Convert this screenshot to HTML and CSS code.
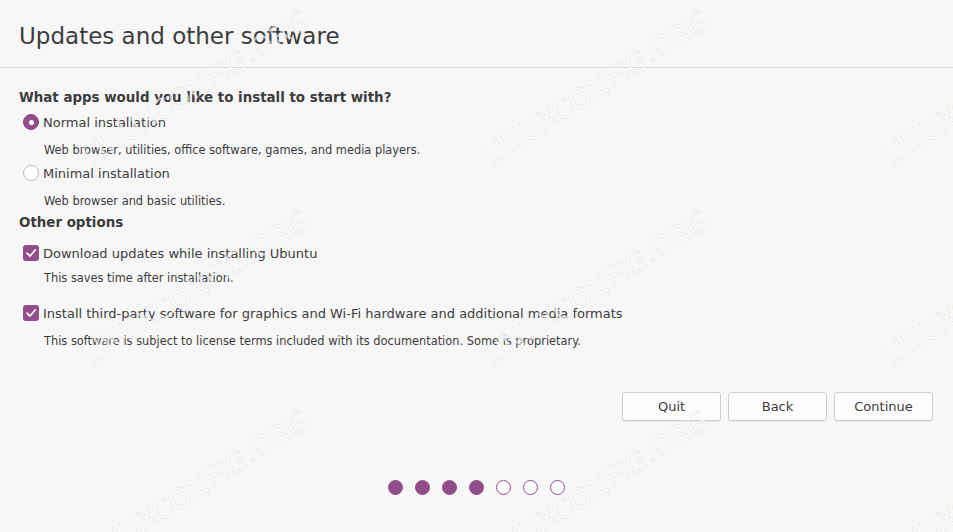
FILE: index.html
```html
<!DOCTYPE html>
<html>
<head>
	<title>Updates and other software</title>
	<meta charset="UTF-8">
	<link rel="stylesheet" href="styles.css">
</head>
<body>

<div class="window">
	<header class="top">
		<h1>Updates and other software</h1>
	</header>

	<main class="content">
		<h2 class="first">What apps would you like to install to start with?</h2>

		<div class="option">
			<span class="radio checked"></span>
			<span class="label">Normal installation</span>
		</div>
		<p class="desc">Web browser, utilities, office software, games, and media players.</p>

		<div class="option minimal">
			<span class="radio"></span>
			<span class="label">Minimal installation</span>
		</div>
		<p class="desc">Web browser and basic utilities.</p>

		<h2 class="other">Other options</h2>

		<div class="option updates">
			<span class="check"><svg viewBox="0 0 16 16" width="16" height="16"><path d="M4 8.2 L7 11 L12.2 5" fill="none" stroke="#fff" stroke-width="1.8" stroke-linecap="round" stroke-linejoin="round"/></svg></span>
			<span class="label">Download updates while installing Ubuntu</span>
		</div>
		<p class="desc short">This saves time after installation.</p>

		<div class="option thirdparty">
			<span class="check"><svg viewBox="0 0 16 16" width="16" height="16"><path d="M4 8.2 L7 11 L12.2 5" fill="none" stroke="#fff" stroke-width="1.8" stroke-linecap="round" stroke-linejoin="round"/></svg></span>
			<span class="label">Install third-party software for graphics and Wi-Fi hardware and additional media formats</span>
		</div>
		<p class="desc">This software is subject to license terms included with its documentation. Some is proprietary.</p>

		<div class="buttons">
			<button>Quit</button>
			<button>Back</button>
			<button>Continue</button>
		</div>

		<ul class="steps">
			<li class="done"></li>
			<li class="done"></li>
			<li class="done"></li>
			<li class="done"></li>
			<li></li>
			<li></li>
			<li></li>
		</ul>
	</main>

	<div class="marks">
		<span class="mark" style="left:90px;top:144px">LINUXCONFIG.ORG</span>
		<span class="mark" style="left:490px;top:144px">LINUXCONFIG.ORG</span>
		<span class="mark" style="left:890px;top:144px">LINUXCONFIG.ORG</span>
		<span class="mark" style="left:90px;top:344px">LINUXCONFIG.ORG</span>
		<span class="mark" style="left:490px;top:344px">LINUXCONFIG.ORG</span>
		<span class="mark" style="left:890px;top:344px">LINUXCONFIG.ORG</span>
		<span class="mark" style="left:90px;top:544px">LINUXCONFIG.ORG</span>
		<span class="mark" style="left:490px;top:544px">LINUXCONFIG.ORG</span>
		<span class="mark" style="left:890px;top:544px">LINUXCONFIG.ORG</span>
	</div>
</div>

</body>
</html>
```

FILE: styles.css
```css
html, body
{
	margin:0;
	padding:0;
	background:#f7f7f7;
}
body
{
	font-family:"DejaVu Sans", sans-serif;
	color:#3c3c3c;
	width:953px;
	height:532px;
	overflow:hidden;
}
.window
{
	position:relative;
	height:532px;
	overflow:hidden;
}
.top
{
	height:68px;
	box-sizing:border-box;
	border-bottom:1px solid #dcdcdc;
	display:flex;
	align-items:center;
	padding:5px 19px 0 19px;
}
h1
{
	font-size:23px;
	font-weight:normal;
	margin:0;
}
.content
{
	padding:0 20px 0 19px;
}
h2
{
	font-size:13.4px;
	font-weight:bold;
	line-height:18px;
	margin:0;
}
h2.first { margin-top:21px; }
h2.other { margin-top:6px; }

.option
{
	display:flex;
	align-items:center;
	height:20px;
	margin-top:5px;
	padding-left:4px;
}
.option.minimal { margin-top:6px; }
.option.updates { margin-top:11px; }
.option.thirdparty { margin-top:18px; }
.label
{
	font-size:13px;
	margin-left:4px;
}
.radio
{
	width:16px;
	height:16px;
	box-sizing:border-box;
	border-radius:50%;
	border:1px solid #bdbdbd;
	background:#fff;
	position:relative;
}
.radio.checked
{
	background:#924d8b;
	border-color:#884481;
}
.radio.checked::after
{
	content:"";
	position:absolute;
	left:4.5px;
	top:4.5px;
	width:5px;
	height:5px;
	border-radius:50%;
	background:#fff;
}
.check
{
	width:16px;
	height:16px;
	border-radius:3px;
	background:#924d8b;
	display:block;
}
.check svg { display:block; }
.desc
{
	font-size:11.4px;
	line-height:14px;
	margin:11px 0 0 25px;
}
.desc.short { margin-top:8px; }

.buttons
{
	display:flex;
	justify-content:flex-end;
	gap:7px;
	margin-top:44px;
}
button
{
	width:99px;
	height:29px;
	font-family:"DejaVu Sans", sans-serif;
	font-size:13px;
	color:#3c3c3c;
	background:#fdfdfd;
	border:1px solid #cdcdcd;
	border-radius:3px;
	box-shadow:0 1px 0 rgba(0,0,0,0.06);
}
.steps
{
	list-style:none;
	padding:0;
	margin:59px 0 0 0;
	display:flex;
	justify-content:center;
	gap:12px;
}
.steps li
{
	width:15px;
	height:15px;
	box-sizing:border-box;
	border-radius:50%;
	border:1.3px solid #924d8b;
	background:#fff;
}
.steps li.done
{
	background:#924d8b;
}

.marks
{
	position:absolute;
	left:0;
	top:0;
	right:0;
	bottom:0;
	pointer-events:none;
}
.mark
{
	position:absolute;
	font-size:28px;
	line-height:1;
	white-space:nowrap;
	color:rgba(255,255,255,0.6);
	-webkit-text-stroke:0.5px rgba(0,0,0,0.14);
	transform-origin:0 24px;
	transform:rotate(-32.5deg);
}
```
